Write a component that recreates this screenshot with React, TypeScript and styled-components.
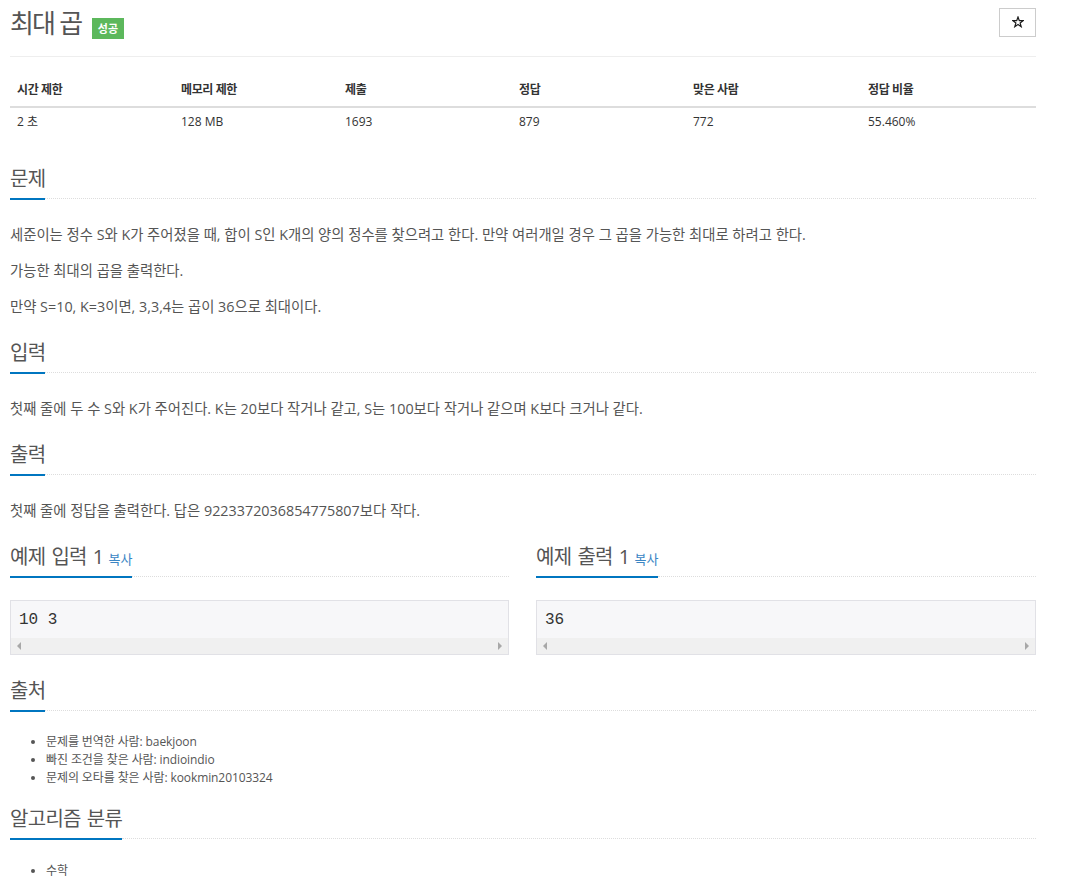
import React from "react";
import styled, { createGlobalStyle } from "styled-components";

const GlobalStyle = createGlobalStyle`
  html, body { margin: 0; padding: 0; background: #fff; }
  body {
    font-family: "Open Sans", "Noto Sans CJK KR", sans-serif;
    color: #555;
  }
`;

const Page = styled.div`
  width: 1026px;
  margin-left: 10px;
  padding-bottom: 20px;
`;

const Header = styled.div`
  display: flex;
  justify-content: space-between;
  align-items: flex-start;
  padding-top: 6px;
  padding-bottom: 16px;
  border-bottom: 1px solid #eee;
`;

const TitleRow = styled.div`
  display: flex;
  align-items: baseline;
`;

const Title = styled.h1`
  margin: 0;
  font-size: 26px;
  line-height: 34px;
  font-weight: 400;
  letter-spacing: -1.8px;
  color: #555;
`;

const Badge = styled.span`
  display: inline-block;
  margin-left: 11px;
  padding: 0 5.5px;
  height: 21px;
  line-height: 21px;
  background: #5cb85c;
  color: #fff;
  font-size: 11px;
  font-weight: 700;
`;

const StarButton = styled.button`
  margin-top: 2px;
  width: 37px;
  height: 29px;
  border: 1px solid #ccc;
  background: #fff;
  padding: 0 0 2px;
  display: flex;
  align-items: center;
  justify-content: center;
`;

const InfoGrid = styled.div`
  display: grid;
  grid-template-columns: 164px 164px 174px 174px 175px 175px;
  margin-top: 15px;
  color: #333;
  font-size: 12px;
`;

const HeadCell = styled.div`
  padding: 8px 7px 6px;
  line-height: 20px;
  font-weight: 700;
  letter-spacing: -0.4px;
  border-bottom: 2px solid #ddd;
`;

const Cell = styled.div`
  padding: 4px 7px 8px;
  line-height: 20px;
`;

const Section = styled.section<{ $top?: number; $bottom?: number }>`
  display: flow-root;
  margin-top: ${(p) => p.$top ?? 0}px;
  margin-bottom: ${(p) => p.$bottom ?? 8}px;
`;

const Headline = styled.div`
  display: flex;
  align-items: flex-end;
`;

const HeadText = styled.h2`
  margin: 0;
  font-size: 20px;
  line-height: 24px;
  font-weight: 400;
  letter-spacing: -0.7px;
  word-spacing: 1.5px;
  color: #555;
  padding-bottom: 7px;
  border-bottom: 2px solid #0076c0;
  white-space: nowrap;
`;

const HeadFill = styled.div`
  flex: 1;
  border-bottom: 1px dotted #ddd;
  margin-bottom: 1px;
`;

const CopyLink = styled.span`
  font-size: 13px;
  line-height: 1;
  letter-spacing: 0;
  color: #3b86c4;
  margin-left: 5px;
`;

const Body = styled.div<{ $gap: number }>`
  margin-top: ${(p) => p.$gap}px;
`;

const P = styled.p`
  margin: 0 0 16px;
  font-size: 14.35px;
  line-height: 20px;
  color: #555;
`;

const SampleRow = styled.div`
  display: grid;
  grid-template-columns: 499px 500px;
  column-gap: 27px;
  margin-top: 2px;
  margin-bottom: 24px;
`;

const CodeBox = styled.div`
  border: 1px solid #e1e1e6;
  background: #f7f7f9;
`;

const Code = styled.pre`
  margin: 0;
  padding: 9px 8px 8px;
  font-family: "Liberation Mono", "DejaVu Sans Mono", monospace;
  font-size: 16px;
  line-height: 20px;
  color: #333;
`;

const ScrollTrack = styled.div`
  height: 16px;
  background: #f0f0f0;
  display: flex;
  justify-content: space-between;
  align-items: center;
  padding: 0 6px;
`;

const Arrow = styled.span<{ $dir: "left" | "right" }>`
  width: 0;
  height: 0;
  border-top: 4px solid transparent;
  border-bottom: 4px solid transparent;
  ${(p) =>
    p.$dir === "left"
      ? "border-right: 4px solid #a8a8a8;"
      : "border-left: 4px solid #a8a8a8;"}
`;

const List = styled.ul`
  margin: 0;
  padding-left: 36px;
  font-size: 12px;
  line-height: 18px;
  letter-spacing: -0.1px;
  color: #555;
`;

const heads = ["시간 제한", "메모리 제한", "제출", "정답", "맞은 사람", "정답 비율"];
const vals = ["2 초", "128 MB", "1693", "879", "772", "55.460%"];

function StarIcon() {
  return (
    <svg width="12" height="12" viewBox="0 0 24 24" fill="none" stroke="#1a1a1a" strokeWidth="2.4" strokeLinejoin="miter">
      <polygon points="12,2 14.6,9.2 22.3,9.3 16.2,14 18.4,21.4 12,17 5.6,21.4 7.8,14 1.7,9.3 9.4,9.2" />
    </svg>
  );
}

function SectionHead({ children }: { children: React.ReactNode }) {
  return (
    <Headline>
      <HeadText>{children}</HeadText>
      <HeadFill />
    </Headline>
  );
}

function Sample({ title, data }: { title: string; data: string }) {
  return (
    <div>
      <SectionHead>
        {title}
        <CopyLink>복사</CopyLink>
      </SectionHead>
      <Body $gap={22}>
        <CodeBox>
          <Code>{data}</Code>
          <ScrollTrack>
            <Arrow $dir="left" />
            <Arrow $dir="right" />
          </ScrollTrack>
        </CodeBox>
      </Body>
    </div>
  );
}

export default function App() {
  return (
    <>
      <GlobalStyle />
      <Page>
        <Header>
          <TitleRow>
            <Title>최대 곱</Title>
            <Badge>성공</Badge>
          </TitleRow>
          <StarButton aria-label="star">
            <StarIcon />
          </StarButton>
        </Header>

        <InfoGrid>
          {heads.map((h) => (
            <HeadCell key={h}>{h}</HeadCell>
          ))}
          {vals.map((v) => (
            <Cell key={v}>{v}</Cell>
          ))}
        </InfoGrid>

        <Section $top={27}>
          <SectionHead>문제</SectionHead>
          <Body $gap={25}>
            <P>
              세준이는 정수 S와 K가 주어졌을 때, 합이 S인 K개의 양의 정수를 찾으려고 한다. 만약
              여러개일 경우 그 곱을 가능한 최대로 하려고 한다.
            </P>
            <P>가능한 최대의 곱을 출력한다.</P>
            <P>만약 S=10, K=3이면, 3,3,4는 곱이 36으로 최대이다.</P>
          </Body>
        </Section>

        <Section>
          <SectionHead>입력</SectionHead>
          <Body $gap={25}>
            <P>
              첫째 줄에 두 수 S와 K가 주어진다. K는 20보다 작거나 같고, S는 100보다 작거나 같으며
              K보다 크거나 같다.
            </P>
          </Body>
        </Section>

        <Section>
          <SectionHead>출력</SectionHead>
          <Body $gap={25}>
            <P>첫째 줄에 정답을 출력한다. 답은 9223372036854775807보다 작다.</P>
          </Body>
        </Section>

        <SampleRow>
          <Sample title="예제 입력 1" data="10 3" />
          <Sample title="예제 출력 1" data="36" />
        </SampleRow>

        <Section $bottom={20}>
          <SectionHead>출처</SectionHead>
          <Body $gap={21}>
            <List>
              <li>문제를 번역한 사람: baekjoon</li>
              <li>빠진 조건을 찾은 사람: indioindio</li>
              <li>문제의 오타를 찾은 사람: kookmin20103324</li>
            </List>
          </Body>
        </Section>

        <Section>
          <SectionHead>알고리즘 분류</SectionHead>
          <Body $gap={22}>
            <List>
              <li>수학</li>
            </List>
          </Body>
        </Section>
      </Page>
    </>
  );
}
